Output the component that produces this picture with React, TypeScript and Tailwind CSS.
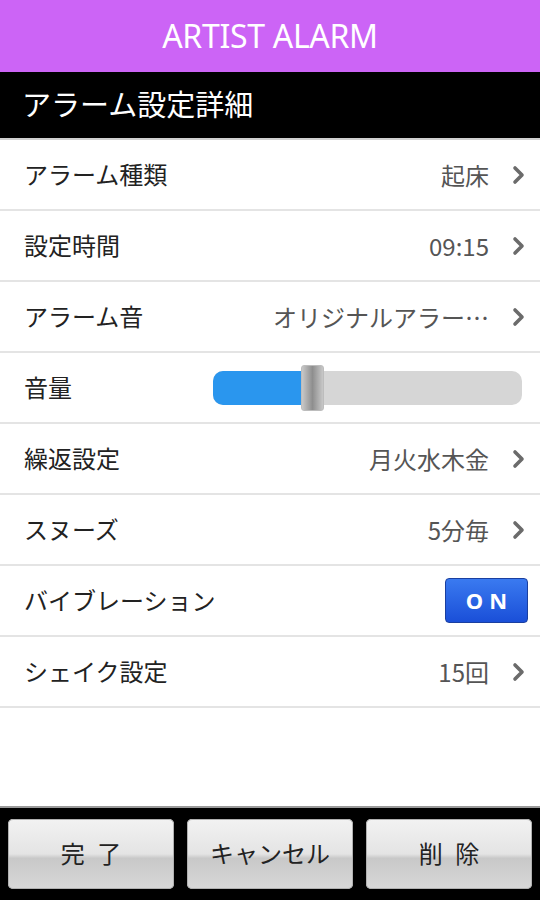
import React from "react";

const font = { fontFamily: '"Noto Sans", "Noto Sans CJK JP", sans-serif' };
const cjk = { fontFamily: '"Noto Sans CJK JP", sans-serif' };

function Chevron() {
  return (
    <svg width="14" height="20" viewBox="0 0 14 20" className="ml-[23px]">
      <path d="M3 3 L10 10 L3 17" fill="none" stroke="#6b6b6b" strokeWidth="3.6" strokeLinecap="round" strokeLinejoin="round" />
    </svg>
  );
}

function Row({ label, value, children }: { label: string; value?: string; children?: React.ReactNode }) {
  return (
    <div className="h-[71px] flex items-center pl-[24px] pr-[14px] border-b-2 border-[#e4e4e4]">
      <div className="text-[24px] text-[#222] flex-none">{label}</div>
      <div className="flex-1 flex items-center justify-end">
        {children ?? (
          <>
            <span className="text-[24px] text-[#555]" style={cjk}>{value}</span>
            <Chevron />
          </>
        )}
      </div>
    </div>
  );
}

function Btn({ label }: { label: string }) {
  return (
    <div className="w-[166px] h-[70px] rounded-[5px] flex items-center justify-center text-[24px] text-[#222] bg-[linear-gradient(#f2f2f2_0%,#e4e4e4_50%,#c8c8c8_56%,#d8d8d8_100%)] shadow-[inset_0_0_0_1px_#b0b0b0] whitespace-pre">
      {label}
    </div>
  );
}

export default function App() {
  return (
    <div className="w-[540px] h-[900px] flex flex-col bg-white overflow-hidden" style={font}>
      <div className="h-[72px] bg-[#cc64f6] flex items-center justify-center text-white text-[32px] tracking-[-0.3px]">
        ARTIST ALARM
      </div>
      <div className="h-[68px] bg-black flex items-center pl-[22px] text-white text-[29px] border-b-2 border-[#d0d0d0]">
        アラーム設定詳細
      </div>
      <Row label="アラーム種類" value="起床" />
      <Row label="設定時間" value="09:15" />
      <Row label="アラーム音" value="オリジナルアラー…" />
      <Row label="音量">
        <div className="relative w-[309px] h-[34px] mr-[4px] rounded-[10px] bg-[#d6d6d6]">
          <div className="absolute left-0 top-0 h-[34px] w-[96px] rounded-l-[10px] bg-[#2a96ee]" />
          <div className="absolute left-[88px] top-[-6px] w-[23px] h-[46px] rounded-[3px] border border-[#bdbdbd] bg-[linear-gradient(90deg,#c8c8c8,#8e8e8e_50%,#c8c8c8)]" />
        </div>
      </Row>
      <Row label="繰返設定" value="月火水木金" />
      <Row label="スヌーズ" value="5分毎" />
      <Row label="バイブレーション">
        <div className="w-[83px] h-[45px] rounded-[4px] bg-[linear-gradient(#3a7af0,#1a4fd8)] border border-[#1a3fa0] flex items-center justify-center text-white text-[22px] font-bold tracking-[6px] pl-[6px] mr-[-2px]">
          ON
        </div>
      </Row>
      <Row label="シェイク設定" value="15回" />
      <div className="flex-1" />
      <div className="h-[94px] bg-black border-t-2 border-[#9a9a9a] flex items-center justify-between px-[8px]">
        <Btn label={"完  了"} />
        <Btn label="キャンセル" />
        <Btn label={"削  除"} />
      </div>
    </div>
  );
}
